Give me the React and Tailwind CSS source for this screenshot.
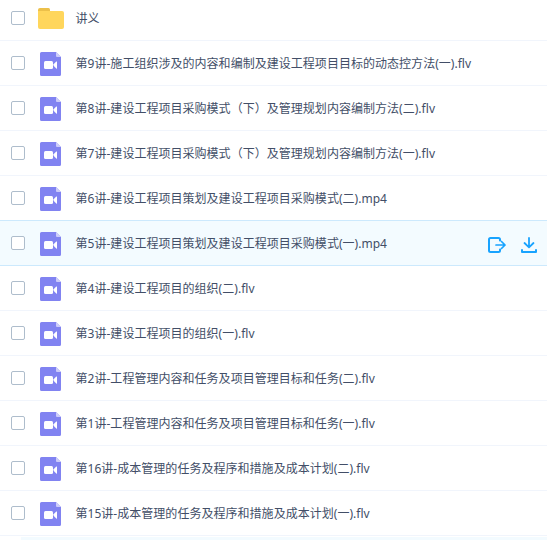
import clsx from "clsx";

const files = [
  { name: "讲义", type: "folder" },
  { name: "第9讲-施工组织涉及的内容和编制及建设工程项目目标的动态控方法(一).flv", type: "video" },
  { name: "第8讲-建设工程项目采购模式（下）及管理规划内容编制方法(二).flv", type: "video" },
  { name: "第7讲-建设工程项目采购模式（下）及管理规划内容编制方法(一).flv", type: "video" },
  { name: "第6讲-建设工程项目策划及建设工程项目采购模式(二).mp4", type: "video" },
  { name: "第5讲-建设工程项目策划及建设工程项目采购模式(一).mp4", type: "video", active: true },
  { name: "第4讲-建设工程项目的组织(二).flv", type: "video" },
  { name: "第3讲-建设工程项目的组织(一).flv", type: "video" },
  { name: "第2讲-工程管理内容和任务及项目管理目标和任务(二).flv", type: "video" },
  { name: "第1讲-工程管理内容和任务及项目管理目标和任务(一).flv", type: "video" },
  { name: "第16讲-成本管理的任务及程序和措施及成本计划(二).flv", type: "video" },
  { name: "第15讲-成本管理的任务及程序和措施及成本计划(一).flv", type: "video" },
];

function FolderIcon() {
  return (
    <svg width="26" height="21" viewBox="0 0 26 21">
      <path d="M0 2a2 2 0 0 1 2-2h8.500a1.500 1.500 0 0 1 1.500 1.500V8H0z" fill="#ecc04a" />
      <path d="M0 3h24a2 2 0 0 1 2 2v14a2 2 0 0 1-2 2H2a2 2 0 0 1-2-2z" fill="#ffd65c" />
    </svg>
  );
}

function VideoIcon() {
  return (
    <svg width="21" height="24" viewBox="0 0 21 24">
      <path d="M1.500 0H16l5 5v17.500a1.500 1.500 0 0 1-1.500 1.500h-18A1.500 1.500 0 0 1 0 22.500v-21A1.500 1.500 0 0 1 1.500 0z" fill="#8183f1" />
      <path d="M16 0l5 5h-4a1 1 0 0 1-1-1z" fill="#cdcdfa" />
      <rect x="4" y="9" width="9" height="8" rx="1.500" fill="#fff" />
      <path d="M13.600 12.200L16.200 9.600q.8-.6.8.4v6q0 1-.8.4L13.600 13.800z" fill="#fff" />
    </svg>
  );
}

function ShareIcon() {
  return (
    <svg width="18" height="16" viewBox="0 0 18 16" fill="none" stroke="#18a3ff" strokeWidth="2" strokeLinecap="round" strokeLinejoin="round">
      <path d="M12 3.500V2.500A1.500 1.500 0 0 0 10.500 1h-8A1.500 1.500 0 0 0 1 2.500v11A1.500 1.500 0 0 0 2.500 15h8a1.500 1.500 0 0 0 1.500-1.500v-1" />
      <path d="M8 8h9M13.500 4.500L17 8l-3.500 3.500" strokeWidth="1.700" />
    </svg>
  );
}

function DownloadIcon() {
  return (
    <svg width="16" height="16" viewBox="0 0 16 16" fill="none" stroke="#18a3ff" strokeWidth="2" strokeLinecap="round" strokeLinejoin="round">
      <path d="M8 1v9M3.500 6L8 10.300 12.500 6" strokeWidth="1.800" />
      <path d="M1 13v2h14v-2" />
    </svg>
  );
}

function FileRow({ file }) {
  const isFolder = file.type === "folder";

  return (
    <li
      className={clsx(
        "flex items-center border-b pl-[11px] pr-2.5",
        isFolder ? "h-[41px] pb-1" : "h-[45px]",
        file.active ? "-mt-px h-[46px] border-t border-[#cce9fd] bg-[#f3fbff]" : "border-[#f1f5fc]"
      )}
    >
      <span className="h-3.5 w-3.5 shrink-0 rounded-[2px] border border-[#aebdcc] bg-white" />
      <span className="ml-3 flex w-[27px] shrink-0 justify-center pt-px">
        {isFolder ? <FolderIcon /> : <VideoIcon />}
      </span>
      <span className="ml-[11.5px] grow whitespace-nowrap pt-0.5 text-[12px] leading-[18px] tracking-[0.03px]">
        {file.name}
      </span>
      {file.active && (
        <span className="flex items-center gap-[15px] pt-[3px]">
          <ShareIcon />
          <DownloadIcon />
        </span>
      )}
    </li>
  );
}

export default function App() {
  return (
    <main className="h-[540px] w-[547px] overflow-hidden bg-white font-['Noto_Sans','Noto_Sans_CJK_SC',sans-serif] text-[#424e67]">
      <ul>
        {files.map((file) => (
          <FileRow key={file.name} file={file} />
        ))}
      </ul>
      <div className="ml-[21px] mt-px h-[3px] bg-[#f3fbff]" />
    </main>
  );
}
